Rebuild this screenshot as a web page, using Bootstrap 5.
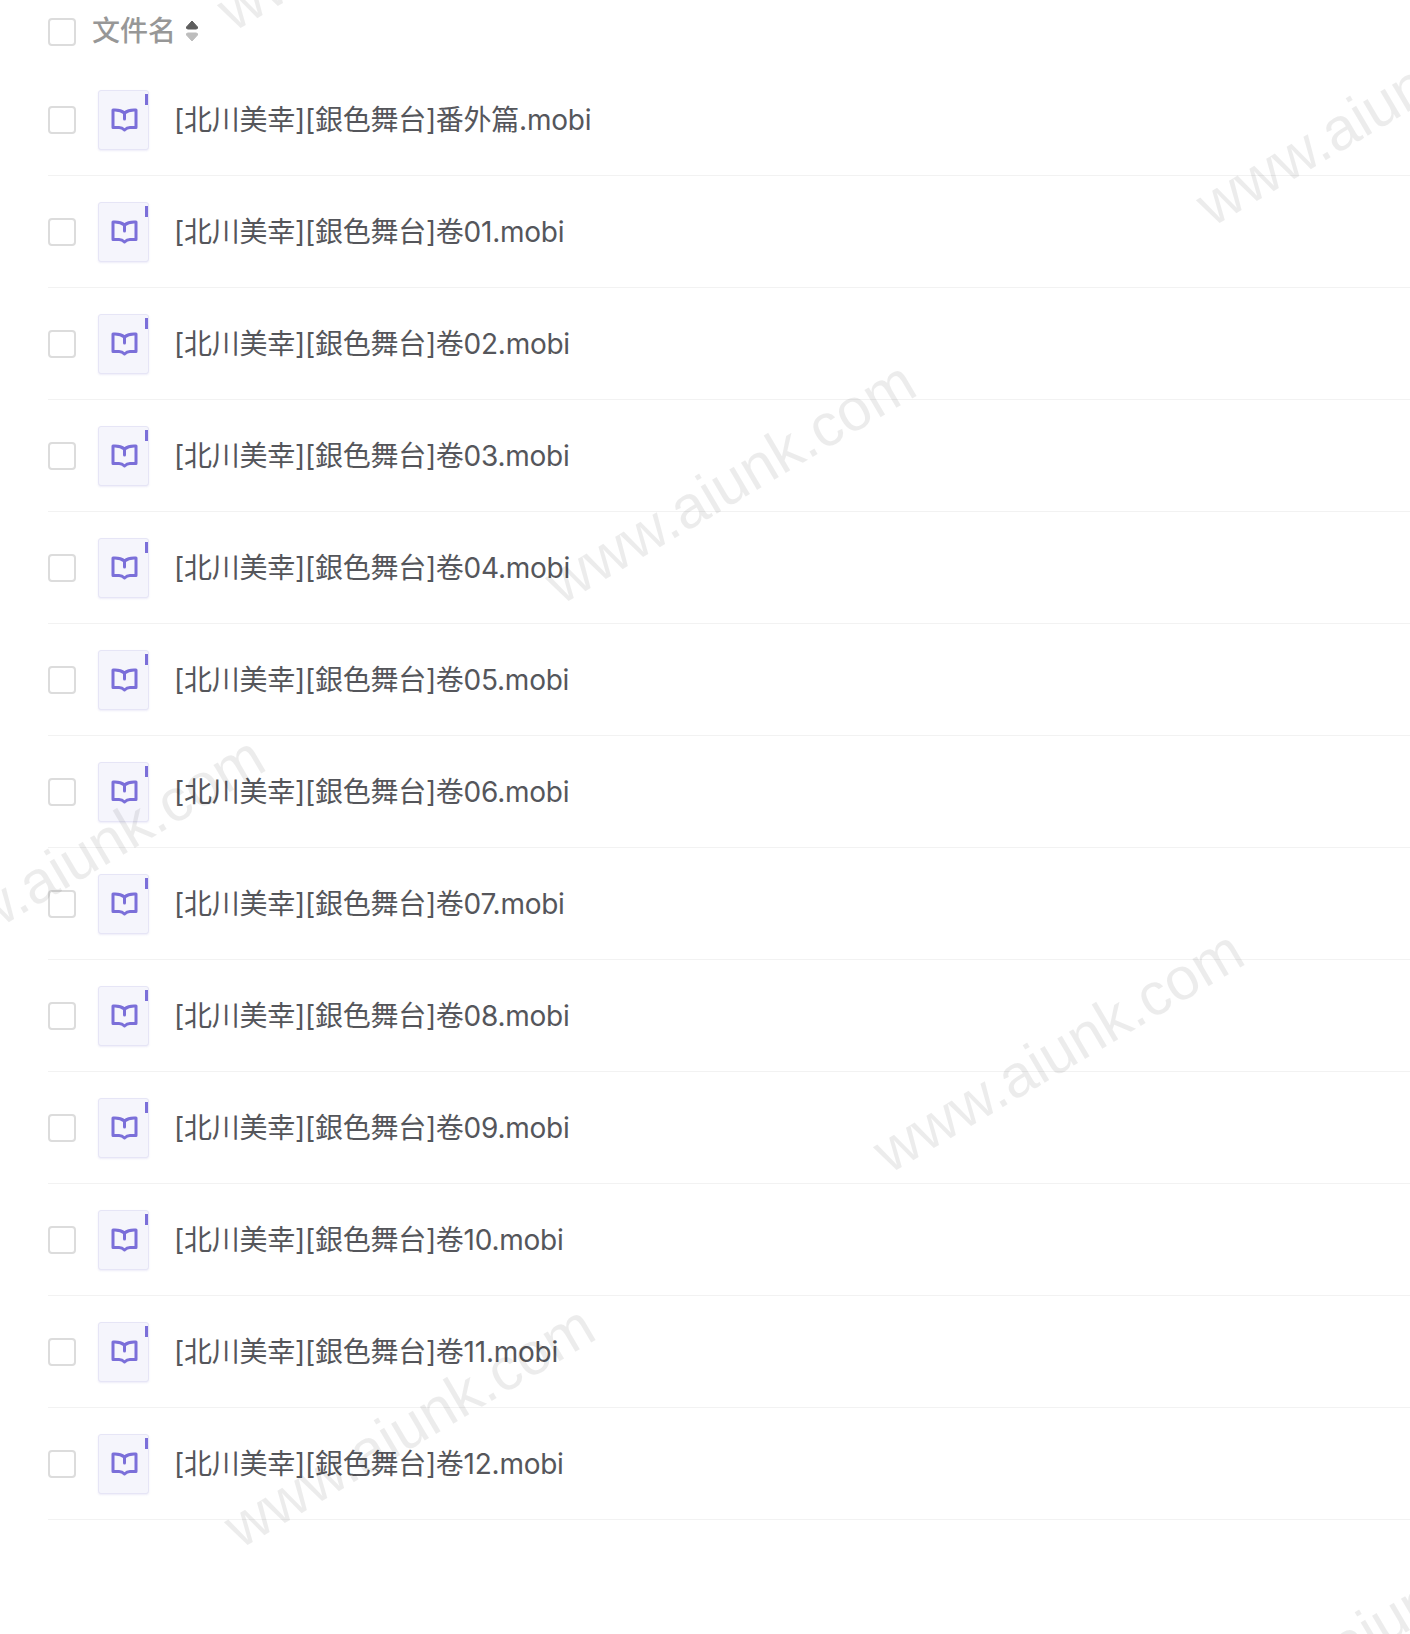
<!DOCTYPE html>
<html lang="zh-CN">
<head>
    <meta charset="UTF-8">
    <meta name="viewport" content="width=device-width, initial-scale=1.0">
    <title>文件列表</title>
    <link href="https://cdn.jsdelivr.net/npm/bootstrap@5.3.3/dist/css/bootstrap.min.css" rel="stylesheet">
    <style>
        body { background: #fff; overflow: hidden; height: 1634px; font-family: Inter, "Noto Sans CJK SC", sans-serif; }
        .file-page { padding-left: 48px; }
        .file-head { height: 64px; gap: 16px; color: #979797; font-size: 28px; font-weight: 500; }
        .head-label { margin-top: -2px; }
        .file-row { height: 112px; border-bottom: 1px solid #f2f2f2; color: #55565b; font-size: 28px; }
        .file-name { letter-spacing: -.25px; }
        .file-check { width: 28px; height: 28px; flex: none; border: 2px solid #dcdcdc; border-radius: 4px; background: #fff; }
        .file-icon { width: 51px; height: 60px; flex: none; margin: 0 25px 0 22px; background: #f5f5fc; border: 1px solid #e6e5f6; border-radius: 3px; box-shadow: 0 1px 2px rgba(110, 100, 200, .12); }
        .file-icon svg { margin: 1px 0 0 1px; }
        .file-icon::after { content: ""; position: absolute; top: 3px; right: 0; width: 3px; height: 11px; background: #7b6fd9; }
        .sort-arrows { margin: -2px 0 0 -7px; }
        .wm-text { position: absolute; font-family: "Liberation Sans", sans-serif; font-size: 60px; line-height: 1; color: rgba(0, 0, 0, .075); white-space: nowrap; transform: rotate(-30.5deg); transform-origin: left bottom; pointer-events: none; }
    </style>
</head>
<body>

<div class="file-page">
    <div class="file-head d-flex align-items-center">
        <span class="file-check"></span>
        <span class="head-label">文件名</span>
        <svg class="sort-arrows" width="14" height="24" viewBox="0 0 14 24">
            <path d="M7 2 L12.5 8 Q13 10 11 10 H3 Q1 10 1.5 8 Z" fill="#5e5e5e" stroke="#5e5e5e" stroke-linejoin="round"/>
            <path d="M7 22 L12.5 16 Q13 14 11 14 H3 Q1 14 1.5 16 Z" fill="#bdbdbd" stroke="#bdbdbd" stroke-linejoin="round"/>
        </svg>
    </div>
    <div id="fileList"></div>
</div>
<div id="marks"></div>

<script>
    const names = ['番外篇', '卷01', '卷02', '卷03', '卷04', '卷05', '卷06', '卷07', '卷08', '卷09', '卷10', '卷11', '卷12'];
    const book = '<svg width="27" height="25" viewBox="0 0 27 25" fill="none" stroke="#7b6fd9" stroke-width="3" stroke-linejoin="round" stroke-linecap="round"><path d="M13.5 5 C11 3 8 2 4 2 H2 V19.5 H8 C10.5 19.5 12 20.5 13.5 22 C15 20.5 16.5 19.5 19 19.5 H25 V2 H23 C19 2 16 3 13.5 5 Z"/><path d="M13.5 5 V11"/></svg>';
    document.getElementById('fileList').innerHTML = names.map(n => `
        <div class="file-row d-flex align-items-center">
            <span class="file-check"></span>
            <span class="file-icon position-relative d-flex align-items-center justify-content-center">${book}</span>
            <span class="file-name">[北川美幸][銀色舞台]${n}.mobi</span>
        </div>`).join('');

    // watermark repeats, left and top of each text
    const marks = [[238, -19], [1217, 176], [566, 554], [-85, 929], [894, 1123], [245, 1498], [1226, 1690]];
    document.getElementById('marks').innerHTML = marks.map(m =>
        `<span class="wm-text" style="left:${m[0]}px;top:${m[1]}px">www.aiunk.com</span>`).join('');
</script>

<script src="https://cdn.jsdelivr.net/npm/bootstrap@5.3.3/dist/js/bootstrap.bundle.min.js"></script>
</body>
</html>
